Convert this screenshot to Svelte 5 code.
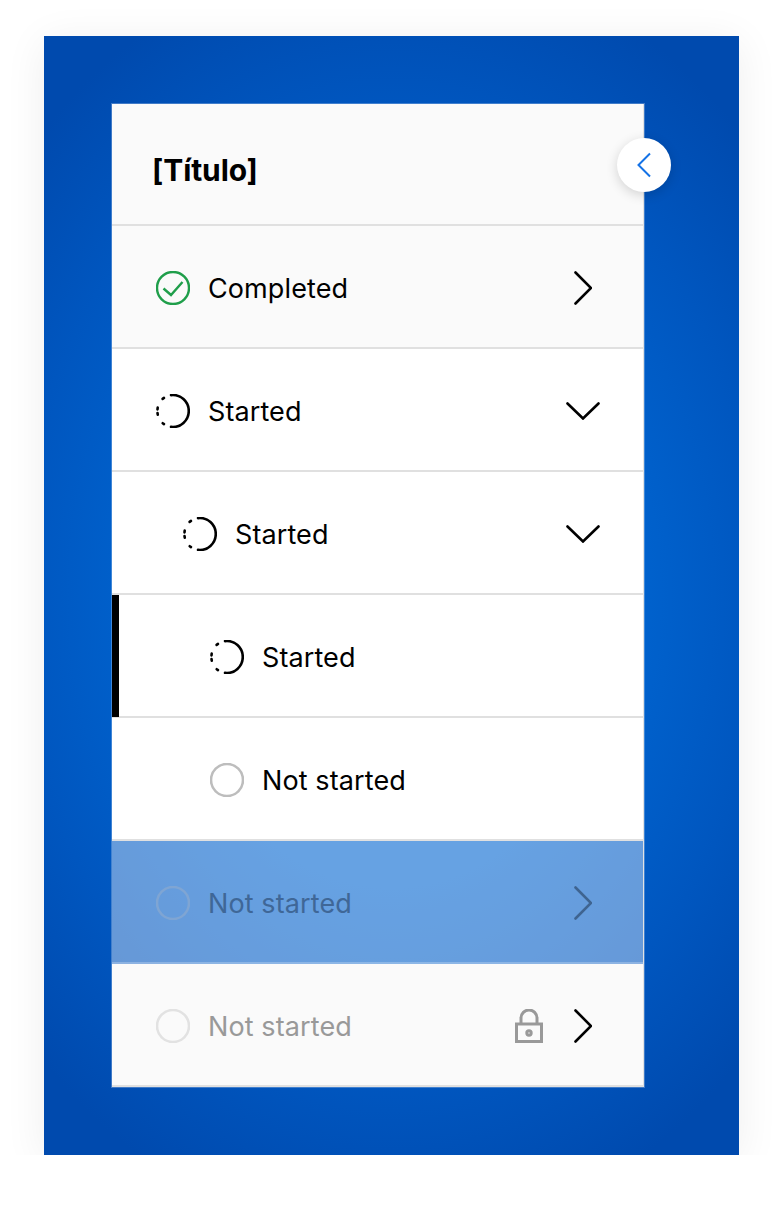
<script>
  const rows = [
    { label: 'Completed', status: 'done', level: 0, tone: 'muted', trail: 'right' },
    { label: 'Started', status: 'started', level: 0, tone: 'plain', trail: 'down' },
    { label: 'Started', status: 'started', level: 1, tone: 'plain', trail: 'down' },
    { label: 'Started', status: 'started', level: 2, tone: 'plain', current: true },
    { label: 'Not started', status: 'todo', level: 2, tone: 'plain' },
    { label: 'Not started', status: 'todo', level: 0, tone: 'hover', trail: 'right' },
    { label: 'Not started', status: 'todo', level: 0, tone: 'locked', trail: 'right', locked: true }
  ];
</script>

<div class="stage">
  <div class="card">
    <header class="title">
      <h1>[Título]</h1>
      <button class="collapse" aria-label="Collapse">
        <svg width="14" height="26" viewBox="0 0 14 26"><path d="M13 1.5 1.5 13 13 24.5" /></svg>
      </button>
    </header>

    {#each rows as row}
      <div class="row {row.tone}" class:current={row.current} style="--level: {row.level}">
        <svg class="status" width="34" height="34" viewBox="0 0 34 34">
          {#if row.status === 'done'}
            <circle class="done" cx="17" cy="17" r="16" />
            <path class="done" d="M7.5 17.5 15 24 26.5 11" />
          {:else if row.status === 'started'}
            <path class="arc" d="M15 1.1A16 16 0 1 1 15 32.9" />
            <path class="dots" d="M6.6 4.9 8 3.9M1.5 15.4 1.7 13.6M1.5 19 1.8 20.8M6.7 29.2 8 30.1" />
          {:else}
            <circle class="todo" cx="17" cy="17" r="16" />
          {/if}
        </svg>
        <span class="label">{row.label}</span>
        {#if row.locked}
          <svg class="lock" width="28" height="34" viewBox="0 0 28 34">
            <path d="M6 15V9a8 8 0 0 1 16 0v6" />
            <rect x="1.5" y="15" width="25" height="17.5" />
            <circle cx="14" cy="24" r="2.2" />
          </svg>
        {/if}
        {#if row.trail === 'right'}
          <svg class="chev right" width="18" height="34" viewBox="0 0 18 34"><path d="M1.5 1.5 17 17 1.5 32.5" /></svg>
        {:else if row.trail === 'down'}
          <svg class="chev down" width="34" height="18" viewBox="0 0 34 18"><path d="M1.5 1.5 17 16.5 32.5 1.5" /></svg>
        {/if}
      </div>
    {/each}
  </div>
</div>

<style>
  :global(body) {
    margin: 0;
    background: #fff;
  }
  .stage {
    box-sizing: border-box;
    width: 695px;
    height: 1119px;
    margin: 36px 0 0 44px;
    padding: 68px 95px 68px 68px;
    background: radial-gradient(ellipse 72% 58% at 50% 50%, #006ad8 0%, #0064d0 45%, #0056bf 75%, #004aae 100%);
    box-shadow: 0 6px 40px rgba(0, 0, 0, 0.07);
    font-family: Inter, "Liberation Sans", sans-serif;
  }
  .card {
    position: relative;
    display: flex;
    flex-direction: column;
    box-sizing: border-box;
    height: 983px;
    border-right: 1px solid #e2e2e2;
    box-shadow: 0 0 0 1px rgba(255, 255, 255, 0.25);
  }
  .title {
    box-sizing: border-box;
    height: 122px;
    display: flex;
    align-items: center;
    padding-left: 40px;
    background: #fafafa;
    border-bottom: 2px solid #e0e0e0;
  }
  h1 {
    margin: 11px 0 0;
    font-size: 30px;
    font-weight: 700;
    color: #000;
    letter-spacing: -0.1px;
  }
  .collapse {
    position: absolute;
    top: 34px;
    right: -28px;
    width: 54px;
    height: 54px;
    display: flex;
    align-items: center;
    justify-content: center;
    padding: 0;
    border: 0;
    border-radius: 50%;
    background: #fff;
    box-shadow: 0 3px 12px rgba(0, 0, 0, 0.16);
  }
  .collapse path {
    fill: none;
    stroke: #1472e6;
    stroke-width: 2;
  }
  .row {
    position: relative;
    box-sizing: border-box;
    height: 123px;
    display: flex;
    align-items: center;
    padding: 3px 43px 0 calc(44px + var(--level) * 27px);
    background: #fff;
    border-bottom: 2px solid #e0e0e0;
    color: #000;
  }
  .muted, .locked {
    background: #fafafa;
  }
  .current::before {
    content: '';
    position: absolute;
    left: 0;
    top: 0;
    bottom: -1px;
    width: 7px;
    background: #000;
  }
  .label {
    margin: 1px auto 0 18px;
    font-size: 27px;
    letter-spacing: 0.1px;
  }
  .status {
    flex: none;
    fill: none;
  }
  .done {
    fill: none;
    stroke: #1f9e4a;
    stroke-width: 2.4;
  }
  .arc, .dots {
    fill: none;
    stroke: #000;
    stroke-width: 2.6;
    stroke-linecap: round;
  }
  .todo {
    fill: none;
    stroke: #bdbdbd;
    stroke-width: 2.6;
  }
  .chev path {
    fill: none;
    stroke: #000;
    stroke-width: 2.6;
    stroke-linecap: round;
  }
  .chev.right {
    margin-right: 8px;
  }
  .lock {
    flex: none;
    margin-right: 31px;
    fill: none;
    stroke: #999;
    stroke-width: 3;
  }
  .hover {
    background: rgba(255, 255, 255, 0.4);
    border-bottom-color: rgba(255, 255, 255, 0.25);
  }
  .hover .label {
    color: #3f6797;
  }
  .hover .todo {
    stroke: #7fa5d3;
  }
  .hover .chev path {
    stroke: #3f6490;
  }
  .locked .label {
    color: #999;
  }
  .locked .todo {
    stroke: #e2e2e2;
  }
</style>
